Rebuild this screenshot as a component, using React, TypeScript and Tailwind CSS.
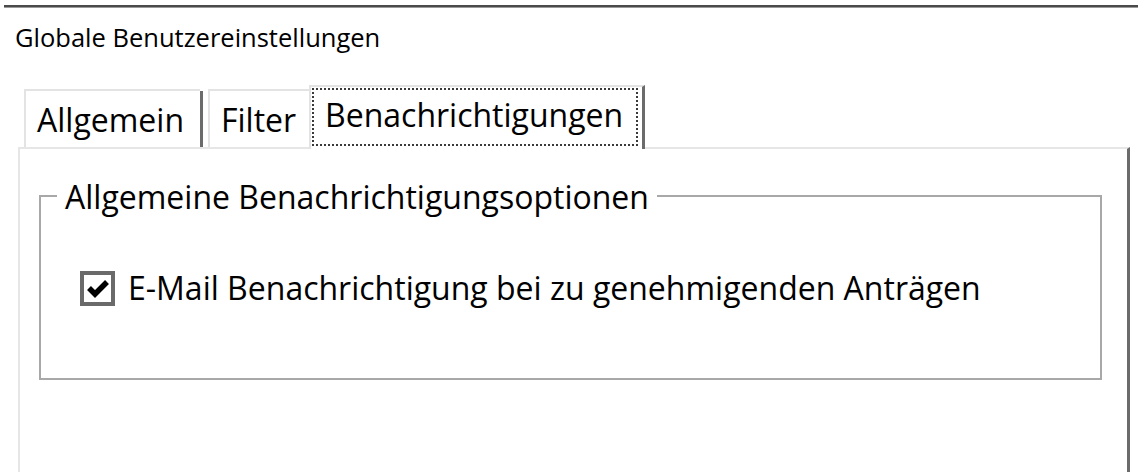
const font = { fontFamily: '"Open Sans", "Noto Sans", sans-serif' };

function Tab({ label, width, selected }: { label: string; width: string; selected?: boolean }) {
  if (selected) {
    return (
      <div className={`${width} h-[64px] -mb-[2px] -ml-[2px] relative z-10 bg-white border-t-2 border-l-2 border-[#e3e3e3] border-r-[3px] border-r-[#6b6b6b] flex pt-[1px] pl-[1px] pr-[4px]`}>
        <div className="flex-1 h-[58px] border-2 border-dotted border-[#3a3a3a] flex items-center pl-[11px] pb-[4px]">
          {label}
        </div>
      </div>
    );
  }
  return (
    <div className={`${width} h-[58px] bg-white border-t-2 border-l-2 border-[#e3e3e3] flex items-center pl-[11px] pt-[2px]`}>
      {label}
    </div>
  );
}

export default function App() {
  return (
    <div className="w-[1138px] h-[472px] bg-white overflow-hidden flex flex-col text-black text-[32px] leading-none" style={font}>
      <div className="ml-[4px] mt-[5px] h-[2px] bg-[#4a4a4a] border-b border-[#9a9a9a] box-content" />

      <div className="pl-[15px] mt-[17px] text-[25.5px]">Globale Benutzereinstellungen</div>

      <div className="flex items-end pl-[24px] mt-[32px] h-[64px]">
        <Tab label="Allgemein" width="w-[176px]" />
        <div className="w-[3px] h-[56px] bg-[#6b6b6b] mr-[5px]" />
        <Tab label="Filter" width="w-[103px]" />
        <Tab label="Benachrichtigungen" width="w-[336px]" selected />
      </div>

      <div className="ml-[18px] w-[1112px] flex-1 border-t-2 border-l-2 border-[#e6e6e6] border-r-[3px] border-r-[#6b6b6b] pt-[46px] pl-[19px]">
        <div className="relative w-[1063px] h-[185px] border-2 border-[#a8a8a8] pt-[74px] pl-[39px] flex items-start">
          <span className="absolute -top-[16px] left-[16px] bg-white px-[8px] leading-[32px]">
            Allgemeine Benachrichtigungsoptionen
          </span>
          <label className="flex items-center gap-[13px]">
            <span className="w-[35px] h-[35px] border-[4px] border-[#6a6a6a] bg-white flex items-center justify-center">
              <svg viewBox="0 0 24 24" className="w-[24px] h-[24px]">
                <path d="M3 12 L9 18 L21 6" fill="none" stroke="#000" strokeWidth="5.5" strokeLinejoin="miter" />
              </svg>
            </span>
            <span>E-Mail Benachrichtigung bei zu genehmigenden Anträgen</span>
          </label>
        </div>
      </div>
    </div>
  );
}
